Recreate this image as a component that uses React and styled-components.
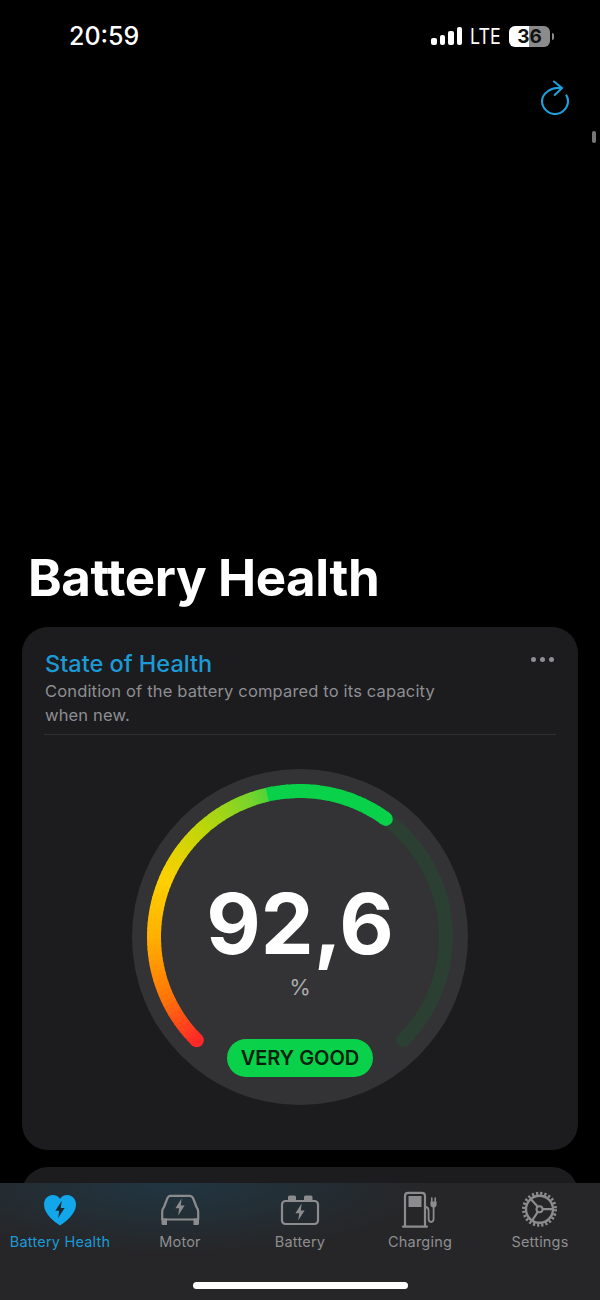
import React from 'react';
import styled, { createGlobalStyle } from 'styled-components';

const GlobalStyle = createGlobalStyle`
  html, body {
    margin: 0;
    background: #000;
  }
  * {
    box-sizing: border-box;
  }
`;

const BLUE = '#1c9ad6';
const GREEN = '#0ad14a';
const ICON_GREY = '#8c8c8f';

// colour stops along the gauge, angle in degrees clockwise from the top
const STOPS = [
  [-135, [255, 40, 40]],
  [-114, [255, 118, 8]],
  [-90, [255, 176, 0]],
  [-67, [255, 208, 0]],
  [-42, [190, 214, 8]],
  [-20, [120, 212, 44]],
  [-13, [80, 212, 54]],
  [-12, [10, 209, 74]],
  [36, [10, 209, 74]],
];

const colorAt = (angle) => {
  for (let i = 1; i < STOPS.length; i++) {
    const [a0, c0] = STOPS[i - 1];
    const [a1, c1] = STOPS[i];
    if (angle <= a1) {
      const t = (angle - a0) / (a1 - a0);
      const mix = c0.map((v, j) => Math.round(v + (c1[j] - v) * t));
      return `rgb(${mix.join(',')})`;
    }
  }
  return 'rgb(10,209,74)';
};

const point = (angle, r) => {
  const rad = (angle * Math.PI) / 180;
  return [168 + r * Math.sin(rad), 168 - r * Math.cos(rad)];
};

const arcPath = (from, to, r) => {
  const [x0, y0] = point(from, r);
  const [x1, y1] = point(to, r);
  const large = to - from > 180 ? 1 : 0;
  return `M${x0} ${y0} A${r} ${r} 0 ${large} 1 ${x1} ${y1}`;
};

const GaugeArc = () => {
  const segments = [];
  for (let a = -135; a < 36; a += 2) {
    segments.push(a);
  }
  const [capX0, capY0] = point(-135, 146);
  const [capX1, capY1] = point(36, 146);
  return (
    <ArcSvg viewBox="0 0 336 336">
      <path d={arcPath(-135, 135, 146)} fill="none" stroke="#2b3f33" strokeWidth="14" strokeLinecap="round" />
      <circle cx={capX0} cy={capY0} r="7" fill={colorAt(-135)} />
      <circle cx={capX1} cy={capY1} r="7" fill={GREEN} />
      {segments.map((a) => (
        <path key={a} d={arcPath(a, Math.min(a + 2.4, 36), 146)} fill="none" stroke={colorAt(a + 1)} strokeWidth="14" />
      ))}
    </ArcSvg>
  );
};

const Bolt = ({ x, y, color, scale = 1 }) => (
  <path
    transform={`translate(${x} ${y}) scale(${scale})`}
    d="M1.6 -8.6 L-4.6 1.2 H-0.8 L-1.8 8.6 L4.6 -1.6 H0.8 Z"
    fill={color}
  />
);

const HeartIcon = () => (
  <svg width="60" height="50" viewBox="0 0 60 50">
    <path
      d="M30 40.5 C25 37 14 29.5 14 19.5 C14 13.5 18.5 10 22.5 10 C26 10 28.6 11.6 30 14 C31.4 11.6 34 10 37.5 10 C41.5 10 46 13.5 46 19.5 C46 29.5 35 37 30 40.5 Z"
      fill="#12a6ea"
    />
    <Bolt x={30} y={24.5} color="#16272f" />
  </svg>
);

const CarIcon = () => (
  <svg width="60" height="50" viewBox="0 0 60 50">
    <path
      d="M20 10.8 H40 Q42 10.8 43 13 L46.5 22 Q48.2 24 48.2 27 V34.5 H12.2 V27 Q12.2 24 14 22 L17.5 13 Q18.5 10.8 20 10.8 Z"
      fill="none"
      stroke={ICON_GREY}
      strokeWidth="2.2"
      strokeLinejoin="round"
    />
    <path d="M11.5 33.5 H17 V40 H13 Q11.5 40 11.5 38.5 Z M43.5 33.5 H49 V38.5 Q49 40 47.5 40 H43.5 Z" fill={ICON_GREY} />
    <Bolt x={30} y={22} color={ICON_GREY} />
  </svg>
);

const BatteryIcon = () => (
  <svg width="60" height="50" viewBox="0 0 60 50">
    <rect x="12" y="16" width="36" height="23" rx="3.5" fill="none" stroke={ICON_GREY} strokeWidth="2.2" />
    <path d="M18 15 V12 Q18 10.5 19.5 10.5 H24.5 Q26 10.5 26 12 V15 Z M34 15 V12 Q34 10.5 35.5 10.5 H41 Q42.5 10.5 42.5 12 V15 Z" fill={ICON_GREY} />
    <Bolt x={30} y={27} color={ICON_GREY} />
  </svg>
);

const ChargingIcon = () => (
  <svg width="60" height="50" viewBox="0 0 60 50">
    <path d="M15 41 V11 Q15 7.8 18.2 7.8 H31.8 Q35 7.8 35 11 V41" fill="none" stroke={ICON_GREY} strokeWidth="2.2" />
    <path d="M13 41.6 H37" stroke={ICON_GREY} strokeWidth="2.2" strokeLinecap="round" />
    <rect x="18.5" y="11" width="13" height="11" fill={ICON_GREY} />
    <path d="M36 22 Q38.6 22.5 38.6 26 V33.5 Q38.6 37 41 37 Q43.6 37 43.6 33.5 V22" fill="none" stroke={ICON_GREY} strokeWidth="1.8" />
    <path d="M40.4 16.5 H46.6 V19.5 Q46.6 22.5 43.5 22.5 Q40.4 22.5 40.4 19.5 Z" fill={ICON_GREY} />
    <path d="M41.8 13 V16.5 M45.2 13 V16.5" stroke={ICON_GREY} strokeWidth="1.6" strokeLinecap="round" />
  </svg>
);

const GearIcon = () => (
  <svg width="60" height="50" viewBox="0 0 60 50">
    <circle cx="29.5" cy="24.3" r="16" fill="none" stroke={ICON_GREY} strokeWidth="3" strokeDasharray="2.2 2" />
    <circle cx="29.5" cy="24.3" r="13.5" fill="none" stroke={ICON_GREY} strokeWidth="2.4" />
    <circle cx="29.5" cy="24.3" r="3" fill="none" stroke={ICON_GREY} strokeWidth="2" />
    <path d="M32.5 24.2 H43 M27.8 21.8 L20.5 13.8 M27.8 26.8 L21.8 36" stroke={ICON_GREY} strokeWidth="2.2" />
  </svg>
);

const RefreshIcon = () => (
  <svg width="32" height="36" viewBox="0 0 32 36" fill="none" stroke="#1f9fdc" strokeWidth="2.1" strokeLinecap="round" strokeLinejoin="round">
    <path d="M22.5 9 C17 8.6 12 9.6 8.5 12.5 C5 15 3 18 3 22 C3 29 9 35 16 35 C23 35 29 29 29 22 C29 20 28.4 18 27.4 16.4" />
    <path d="M15 2.5 L23 9 L15.7 16" />
  </svg>
);

const TABS = [
  { label: 'Battery Health', Icon: HeartIcon, active: true },
  { label: 'Motor', Icon: CarIcon },
  { label: 'Battery', Icon: BatteryIcon },
  { label: 'Charging', Icon: ChargingIcon },
  { label: 'Settings', Icon: GearIcon },
];

const App = () => (
  <Screen>
    <GlobalStyle />
    <StatusBar>
      <Clock>20:59</Clock>
      <StatusRight>
        <Signal>
          <SignalBar $h={7} />
          <SignalBar $h={10} />
          <SignalBar $h={14} />
          <SignalBar $h={18} />
        </Signal>
        <Lte>LTE</Lte>
        <BatteryPill>36</BatteryPill>
        <BatteryNub />
      </StatusRight>
    </StatusBar>
    <TopActions>
      <RefreshIcon />
    </TopActions>
    <ScrollThumb />
    <PageTitle>Battery Health</PageTitle>
    <Card>
      <CardHead>
        <CardTitle>State of Health</CardTitle>
        <MoreDots>
          <span />
          <span />
          <span />
        </MoreDots>
      </CardHead>
      <CardText>Condition of the battery compared to its capacity when new.</CardText>
      <Divider />
      <Dial>
        <GaugeArc />
        <Value>92,6</Value>
        <Unit>%</Unit>
        <Badge>VERY GOOD</Badge>
      </Dial>
    </Card>
    <NextCard />
    <TabBar>
      <Tabs>
        {TABS.map(({ label, Icon, active }) => (
          <Tab key={label} $active={active}>
            <Icon />
            <span>{label}</span>
          </Tab>
        ))}
      </Tabs>
      <HomeBar />
    </TabBar>
  </Screen>
);

const Screen = styled.div`
  position: relative;
  width: 600px;
  height: 1300px;
  overflow: hidden;
  background: #000;
  color: #fff;
  font-family: Inter, 'Liberation Sans', sans-serif;
`;

const StatusBar = styled.div`
  display: flex;
  justify-content: space-between;
  align-items: center;
  height: 72px;
  padding: 0 46px 0 69px;
`;

const Clock = styled.div`
  font-size: 25px;
  font-weight: 500;
`;

const StatusRight = styled.div`
  display: flex;
  align-items: center;
`;

const Signal = styled.div`
  display: flex;
  align-items: flex-end;
  gap: 3px;
  height: 18px;
  margin-right: 8px;
`;

const SignalBar = styled.div`
  width: 5.5px;
  height: ${(p) => p.$h}px;
  border-radius: 2px;
  background: #fff;
`;

const Lte = styled.div`
  width: 30px;
  margin-right: 9px;
  font-size: 21px;
  font-weight: 400;
  white-space: nowrap;
  transform: scaleX(0.85);
  transform-origin: left;
`;

const BatteryPill = styled.div`
  width: 41px;
  height: 21px;
  border-radius: 6px;
  background: linear-gradient(90deg, #fff 0 48%, #8b8b8b 48% 100%);
  color: #111;
  font-size: 19px;
  font-weight: 700;
  line-height: 21px;
  text-align: center;
`;

const BatteryNub = styled.div`
  width: 2px;
  height: 7px;
  margin-left: 2px;
  border-radius: 0 2px 2px 0;
  background: #8b8b8b;
`;

const TopActions = styled.div`
  display: flex;
  justify-content: flex-end;
  height: 40px;
  padding: 7px 29px 0 0;
`;

const ScrollThumb = styled.div`
  position: absolute;
  top: 131px;
  right: 4px;
  width: 4px;
  height: 12px;
  border-radius: 2px;
  background: #777;
`;

const PageTitle = styled.h1`
  margin: 436px 0 0 28px;
  font-size: 51px;
  line-height: 60px;
  font-weight: 700;
  letter-spacing: -0.4px;
`;

const Card = styled.section`
  display: flex;
  flex-direction: column;
  height: 523px;
  margin: 19px 22px 0;
  padding: 22px 22px 0 23px;
  border-radius: 26px;
  background: #1c1c1e;
`;

const CardHead = styled.div`
  display: flex;
  justify-content: space-between;
  align-items: flex-start;
`;

const CardTitle = styled.h2`
  margin: 0;
  font-size: 23.5px;
  line-height: 30px;
  font-weight: 500;
  color: ${BLUE};
`;

const MoreDots = styled.div`
  display: flex;
  gap: 4px;
  margin: 8px 2px 0 0;
  span {
    width: 5px;
    height: 5px;
    border-radius: 50%;
    background: #8e8e93;
  }
`;

const CardText = styled.p`
  width: 400px;
  margin: 0;
  font-size: 16.5px;
  line-height: 24px;
  font-weight: 400;
  letter-spacing: 0.16px;
  color: #8e8e93;
`;

const Divider = styled.div`
  height: 1px;
  margin: 7px 0 34px -1px;
  background: #2f2f31;
`;

const Dial = styled.div`
  position: relative;
  display: flex;
  flex-direction: column;
  align-items: center;
  align-self: center;
  width: 336px;
  height: 336px;
  margin-left: -1px;
  border-radius: 50%;
  background: #333335;
`;

const ArcSvg = styled.svg`
  position: absolute;
  inset: 0;
  width: 336px;
  height: 336px;
`;

const Value = styled.div`
  position: relative;
  margin-top: 105px;
  font-size: 84px;
  line-height: 100px;
  font-weight: 700;
  color: #fff;
`;

const Unit = styled.div`
  position: relative;
  margin-top: -1px;
  font-size: 22px;
  line-height: 28px;
  color: #a9a9ac;
`;

const Badge = styled.div`
  position: relative;
  margin-top: 38px;
  width: 146px;
  height: 38px;
  border-radius: 19px;
  background: ${GREEN};
  color: #04200e;
  font-size: 20px;
  line-height: 38px;
  font-weight: 600;
  text-align: center;
`;

const NextCard = styled.section`
  height: 120px;
  margin: 17px 22px 0;
  border-radius: 26px;
  background: #1c1c1e;
`;

const TabBar = styled.nav`
  position: absolute;
  left: 0;
  right: 0;
  bottom: 0;
  height: 117px;
  padding-top: 2px;
  background:
    radial-gradient(ellipse 260px 70px at 170px 0, rgba(20, 90, 125, 0.3), rgba(20, 90, 125, 0) 100%),
    #262628;
`;

const Tabs = styled.div`
  display: grid;
  grid-template-columns: repeat(5, 1fr);
`;

const Tab = styled.div`
  display: flex;
  flex-direction: column;
  align-items: center;
  color: ${(p) => (p.$active ? BLUE : '#8e8e90')};
  font-size: 14.5px;
  line-height: 14px;
  letter-spacing: 0.2px;
  white-space: nowrap;
  svg {
    display: block;
  }
`;

const HomeBar = styled.div`
  position: absolute;
  left: 193px;
  bottom: 11px;
  width: 215px;
  height: 7px;
  border-radius: 4px;
  background: #fff;
`;

export default App;
